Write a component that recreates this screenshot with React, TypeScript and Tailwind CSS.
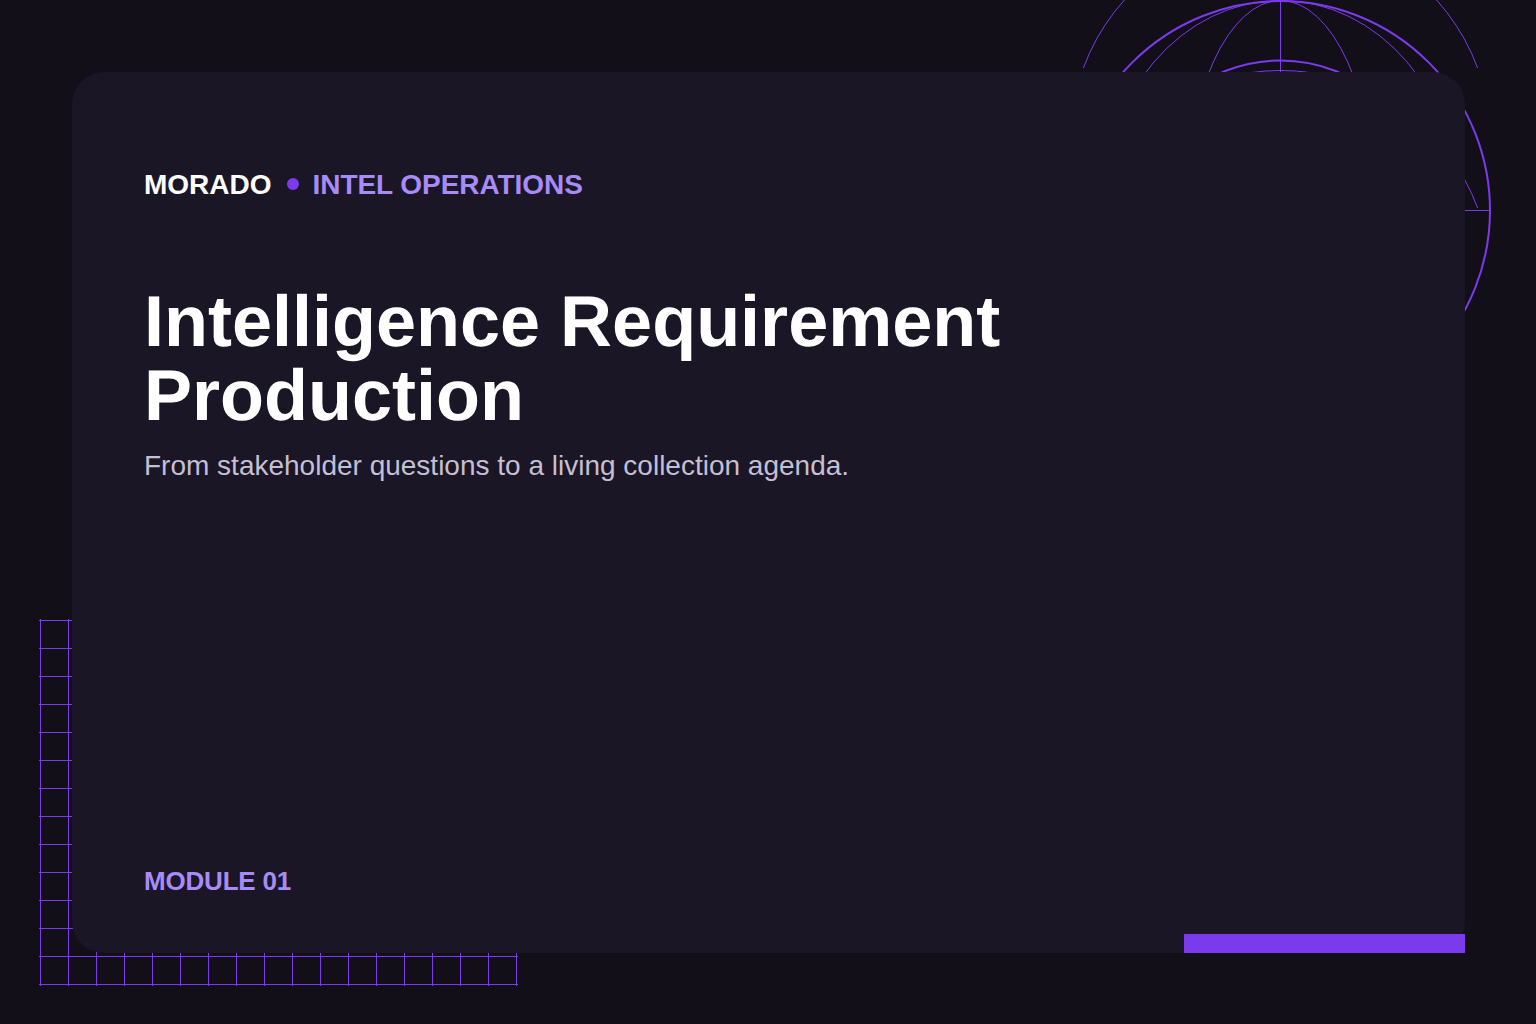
export default function App() {
  const xs = Array.from({ length: 18 }, (_, i) => 40.5 + i * 28);
  const ys = Array.from({ length: 14 }, (_, i) => 620.5 + i * 28);
  return (
    <div className="relative w-[1536px] h-[1024px] overflow-hidden bg-[#120f18] font-[Arial,'Liberation_Sans',sans-serif] pl-[72px] pr-[71px] pt-[72px] pb-[71px]">
      <svg className="absolute left-0 top-0 w-[1536px] h-[1024px]" viewBox="0 0 1536 1024" fill="none" stroke="#7c3aed">
        <circle cx="1280.5" cy="210.5" r="209.5" strokeWidth="2" />
        <circle cx="1280.5" cy="210.5" r="150" strokeWidth="2" />
        <ellipse cx="1280.5" cy="210.5" rx="179" ry="210" strokeWidth="1" />
        <ellipse cx="1280.5" cy="210.5" rx="95" ry="210" strokeWidth="1" />
        <path d="M1280.5 0V420M1070 210.5H1490" strokeWidth="1" />
        <path d="M1083.4 68A210 210 0 0 1 1477.6 68" strokeWidth="1" />
        <path d="M1083.4 208A210 210 0 0 1 1477.6 208" strokeWidth="1" />
        {xs.map((x) => (
          <line key={x} x1={x} y1="619" x2={x} y2="986" strokeWidth="1" />
        ))}
        {ys.map((y) => (
          <line key={y} x1="39" y1={y} x2="518" y2={y} strokeWidth="1" />
        ))}
      </svg>
      <div className="relative flex flex-col h-full rounded-[32px] bg-[#1a1625] pl-[72px] pt-[97px] pb-[57px]">
        <div className="flex items-center text-[28px] leading-[32px] font-bold">
          <span className="text-white">MORADO</span>
          <span className="ml-[15px] mr-[14px] mb-[2px] w-[12px] h-[12px] rounded-full bg-[#7c3aed]" />
          <span className="text-[#a78bfa] tracking-[-0.06px]">INTEL OPERATIONS</span>
        </div>
        <h1 className="mt-[84px] text-[72px] leading-[74px] font-bold text-white [text-rendering:geometricPrecision]">
          Intelligence Requirement
          <br />
          Production
        </h1>
        <p className="mt-[17px] text-[28px] leading-[32px] text-[#c4bfd4]">From stakeholder questions to a living collection agenda.</p>
        <div className="mt-auto text-[26px] leading-[30px] font-bold text-[#a78bfa] tracking-[-0.2px]">MODULE 01</div>
        <div className="absolute right-0 bottom-0 w-[281px] h-[19px] bg-[#7c3aed]" />
      </div>
    </div>
  );
}
